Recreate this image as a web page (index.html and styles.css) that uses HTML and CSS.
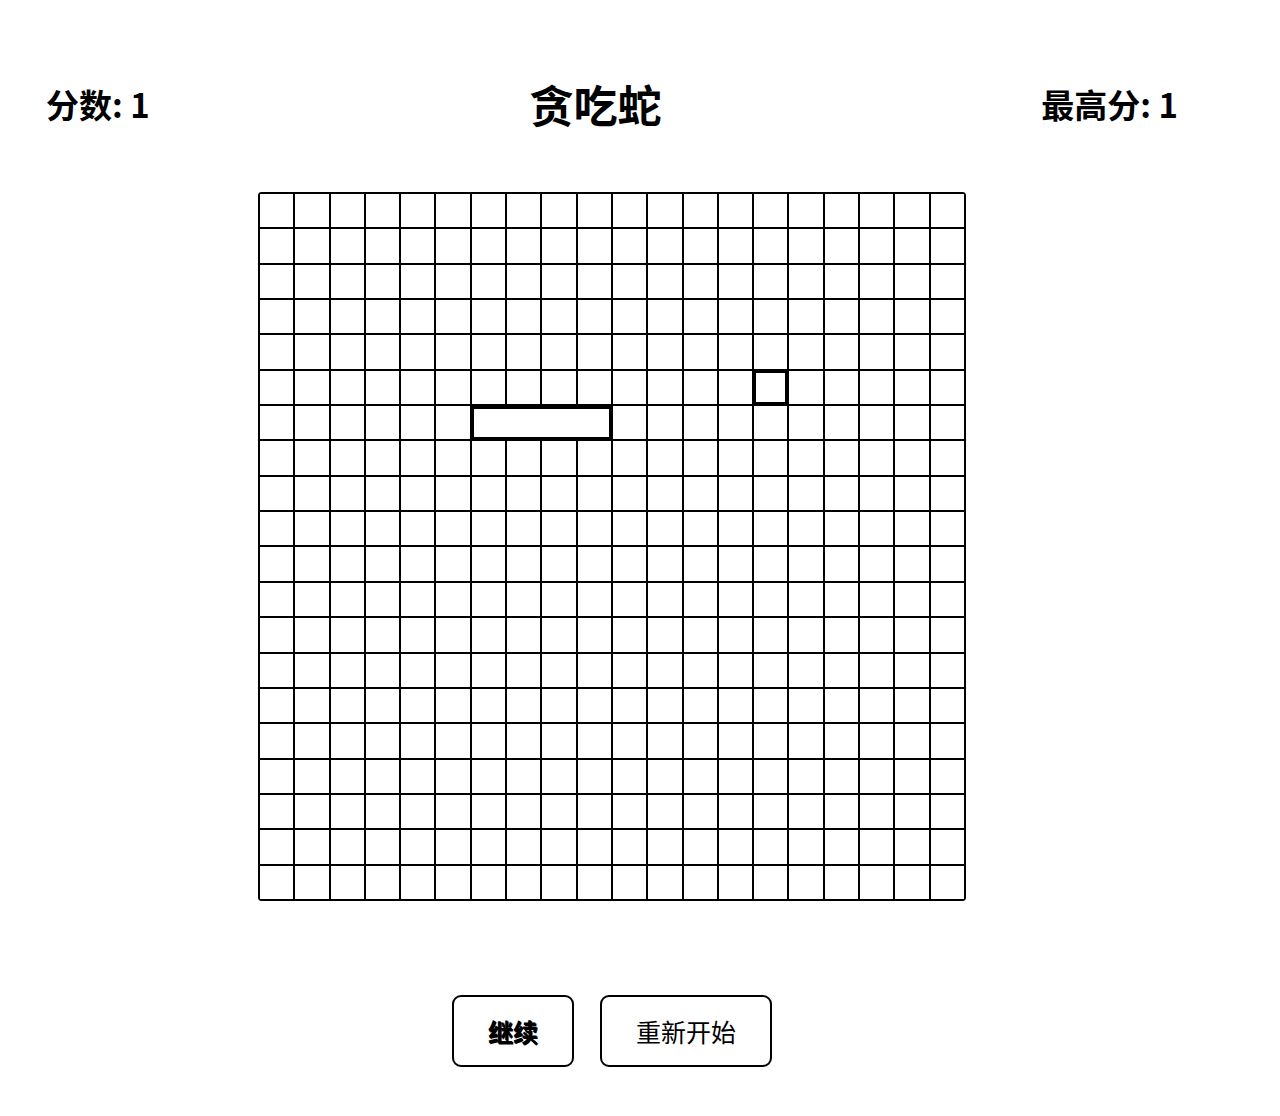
FILE: index.html
```html
<!DOCTYPE html>
<html lang="zh">
<head>
<meta charset="utf-8">
<title>贪吃蛇</title>
<link rel="stylesheet" href="styles.css">
</head>
<body>
<div class="page">
  <header class="header">
    <div class="score">分数: 1</div>
    <h1 class="title">贪吃蛇</h1>
    <div class="score">最高分: 1</div>
  </header>
  <div class="board">
    <div class="c"></div><div class="c"></div><div class="c"></div><div class="c"></div><div class="c"></div><div class="c"></div><div class="c"></div><div class="c"></div><div class="c"></div><div class="c"></div><div class="c"></div><div class="c"></div><div class="c"></div><div class="c"></div><div class="c"></div><div class="c"></div><div class="c"></div><div class="c"></div><div class="c"></div><div class="c"></div>
    <div class="c"></div><div class="c"></div><div class="c"></div><div class="c"></div><div class="c"></div><div class="c"></div><div class="c"></div><div class="c"></div><div class="c"></div><div class="c"></div><div class="c"></div><div class="c"></div><div class="c"></div><div class="c"></div><div class="c"></div><div class="c"></div><div class="c"></div><div class="c"></div><div class="c"></div><div class="c"></div>
    <div class="c"></div><div class="c"></div><div class="c"></div><div class="c"></div><div class="c"></div><div class="c"></div><div class="c"></div><div class="c"></div><div class="c"></div><div class="c"></div><div class="c"></div><div class="c"></div><div class="c"></div><div class="c"></div><div class="c"></div><div class="c"></div><div class="c"></div><div class="c"></div><div class="c"></div><div class="c"></div>
    <div class="c"></div><div class="c"></div><div class="c"></div><div class="c"></div><div class="c"></div><div class="c"></div><div class="c"></div><div class="c"></div><div class="c"></div><div class="c"></div><div class="c"></div><div class="c"></div><div class="c"></div><div class="c"></div><div class="c"></div><div class="c"></div><div class="c"></div><div class="c"></div><div class="c"></div><div class="c"></div>
    <div class="c"></div><div class="c"></div><div class="c"></div><div class="c"></div><div class="c"></div><div class="c"></div><div class="c"></div><div class="c"></div><div class="c"></div><div class="c"></div><div class="c"></div><div class="c"></div><div class="c"></div><div class="c"></div><div class="c"></div><div class="c"></div><div class="c"></div><div class="c"></div><div class="c"></div><div class="c"></div>
    <div class="c"></div><div class="c"></div><div class="c"></div><div class="c"></div><div class="c"></div><div class="c"></div><div class="c"></div><div class="c"></div><div class="c"></div><div class="c"></div><div class="c"></div><div class="c"></div><div class="c"></div><div class="c"></div><div class="c"></div><div class="c"></div><div class="c"></div><div class="c"></div><div class="c"></div><div class="c"></div>
    <div class="c"></div><div class="c"></div><div class="c"></div><div class="c"></div><div class="c"></div><div class="c"></div><div class="c"></div><div class="c"></div><div class="c"></div><div class="c"></div><div class="c"></div><div class="c"></div><div class="c"></div><div class="c"></div><div class="c"></div><div class="c"></div><div class="c"></div><div class="c"></div><div class="c"></div><div class="c"></div>
    <div class="c"></div><div class="c"></div><div class="c"></div><div class="c"></div><div class="c"></div><div class="c"></div><div class="c"></div><div class="c"></div><div class="c"></div><div class="c"></div><div class="c"></div><div class="c"></div><div class="c"></div><div class="c"></div><div class="c"></div><div class="c"></div><div class="c"></div><div class="c"></div><div class="c"></div><div class="c"></div>
    <div class="c"></div><div class="c"></div><div class="c"></div><div class="c"></div><div class="c"></div><div class="c"></div><div class="c"></div><div class="c"></div><div class="c"></div><div class="c"></div><div class="c"></div><div class="c"></div><div class="c"></div><div class="c"></div><div class="c"></div><div class="c"></div><div class="c"></div><div class="c"></div><div class="c"></div><div class="c"></div>
    <div class="c"></div><div class="c"></div><div class="c"></div><div class="c"></div><div class="c"></div><div class="c"></div><div class="c"></div><div class="c"></div><div class="c"></div><div class="c"></div><div class="c"></div><div class="c"></div><div class="c"></div><div class="c"></div><div class="c"></div><div class="c"></div><div class="c"></div><div class="c"></div><div class="c"></div><div class="c"></div>
    <div class="c"></div><div class="c"></div><div class="c"></div><div class="c"></div><div class="c"></div><div class="c"></div><div class="c"></div><div class="c"></div><div class="c"></div><div class="c"></div><div class="c"></div><div class="c"></div><div class="c"></div><div class="c"></div><div class="c"></div><div class="c"></div><div class="c"></div><div class="c"></div><div class="c"></div><div class="c"></div>
    <div class="c"></div><div class="c"></div><div class="c"></div><div class="c"></div><div class="c"></div><div class="c"></div><div class="c"></div><div class="c"></div><div class="c"></div><div class="c"></div><div class="c"></div><div class="c"></div><div class="c"></div><div class="c"></div><div class="c"></div><div class="c"></div><div class="c"></div><div class="c"></div><div class="c"></div><div class="c"></div>
    <div class="c"></div><div class="c"></div><div class="c"></div><div class="c"></div><div class="c"></div><div class="c"></div><div class="c"></div><div class="c"></div><div class="c"></div><div class="c"></div><div class="c"></div><div class="c"></div><div class="c"></div><div class="c"></div><div class="c"></div><div class="c"></div><div class="c"></div><div class="c"></div><div class="c"></div><div class="c"></div>
    <div class="c"></div><div class="c"></div><div class="c"></div><div class="c"></div><div class="c"></div><div class="c"></div><div class="c"></div><div class="c"></div><div class="c"></div><div class="c"></div><div class="c"></div><div class="c"></div><div class="c"></div><div class="c"></div><div class="c"></div><div class="c"></div><div class="c"></div><div class="c"></div><div class="c"></div><div class="c"></div>
    <div class="c"></div><div class="c"></div><div class="c"></div><div class="c"></div><div class="c"></div><div class="c"></div><div class="c"></div><div class="c"></div><div class="c"></div><div class="c"></div><div class="c"></div><div class="c"></div><div class="c"></div><div class="c"></div><div class="c"></div><div class="c"></div><div class="c"></div><div class="c"></div><div class="c"></div><div class="c"></div>
    <div class="c"></div><div class="c"></div><div class="c"></div><div class="c"></div><div class="c"></div><div class="c"></div><div class="c"></div><div class="c"></div><div class="c"></div><div class="c"></div><div class="c"></div><div class="c"></div><div class="c"></div><div class="c"></div><div class="c"></div><div class="c"></div><div class="c"></div><div class="c"></div><div class="c"></div><div class="c"></div>
    <div class="c"></div><div class="c"></div><div class="c"></div><div class="c"></div><div class="c"></div><div class="c"></div><div class="c"></div><div class="c"></div><div class="c"></div><div class="c"></div><div class="c"></div><div class="c"></div><div class="c"></div><div class="c"></div><div class="c"></div><div class="c"></div><div class="c"></div><div class="c"></div><div class="c"></div><div class="c"></div>
    <div class="c"></div><div class="c"></div><div class="c"></div><div class="c"></div><div class="c"></div><div class="c"></div><div class="c"></div><div class="c"></div><div class="c"></div><div class="c"></div><div class="c"></div><div class="c"></div><div class="c"></div><div class="c"></div><div class="c"></div><div class="c"></div><div class="c"></div><div class="c"></div><div class="c"></div><div class="c"></div>
    <div class="c"></div><div class="c"></div><div class="c"></div><div class="c"></div><div class="c"></div><div class="c"></div><div class="c"></div><div class="c"></div><div class="c"></div><div class="c"></div><div class="c"></div><div class="c"></div><div class="c"></div><div class="c"></div><div class="c"></div><div class="c"></div><div class="c"></div><div class="c"></div><div class="c"></div><div class="c"></div>
    <div class="c"></div><div class="c"></div><div class="c"></div><div class="c"></div><div class="c"></div><div class="c"></div><div class="c"></div><div class="c"></div><div class="c"></div><div class="c"></div><div class="c"></div><div class="c"></div><div class="c"></div><div class="c"></div><div class="c"></div><div class="c"></div><div class="c"></div><div class="c"></div><div class="c"></div><div class="c"></div>
    <div class="snake"></div>
    <div class="food"></div>
  </div>
  <div class="controls">
    <button class="btn btn-active" type="button">继续</button>
    <button class="btn" type="button">重新开始</button>
  </div>
</div>
</body>
</html>
```
FILE: styles.css
```css
* { box-sizing: border-box; }
html, body { margin: 0; padding: 0; background: #fff; }
body {
  font-family: "Noto Sans CJK SC", "Noto Sans", sans-serif;
  color: #000;
}
.page {
  width: 1132px;
  margin-left: 46px;
  display: flex;
  flex-direction: column;
  align-items: center;
}
.header {
  width: 100%;
  margin-top: 78px;
  height: 52px;
  display: flex;
  justify-content: space-between;
  align-items: center;
}
.score {
  font-size: 33px;
  font-weight: 700;
  line-height: 52px;
}
.title {
  margin: 0;
  font-size: 44px;
  font-weight: 700;
  line-height: 52px;
}
.board {
  position: relative;
  margin-top: 62px;
  width: 708px;
  height: 709px;
  border: 1px solid #000;
  border-radius: 3px;
  display: grid;
  grid-template-columns: repeat(20, 1fr);
  grid-template-rows: repeat(20, 1fr);
}
.c {
  border: 1px solid #000;
  background: #fff;
}
.snake, .food {
  position: absolute;
  background: #fff;
  border: 3px solid #000;
}
.snake {
  left: 212px;
  top: 213px;
  width: 141px;
  height: 34px;
}
.food {
  left: 494px;
  top: 177px;
  width: 35px;
  height: 35px;
}
.controls {
  margin-top: 94px;
  display: flex;
  gap: 26px;
}
.btn {
  height: 72px;
  padding: 0 34px;
  background: #fff;
  border: 2px solid #000;
  border-radius: 9px;
  font-family: "Noto Sans CJK SC", sans-serif;
  font-size: 25px;
  color: #000;
}
.btn-active {
  font-weight: 700;
  text-shadow: 1px 1px 0 #000;
}
```
